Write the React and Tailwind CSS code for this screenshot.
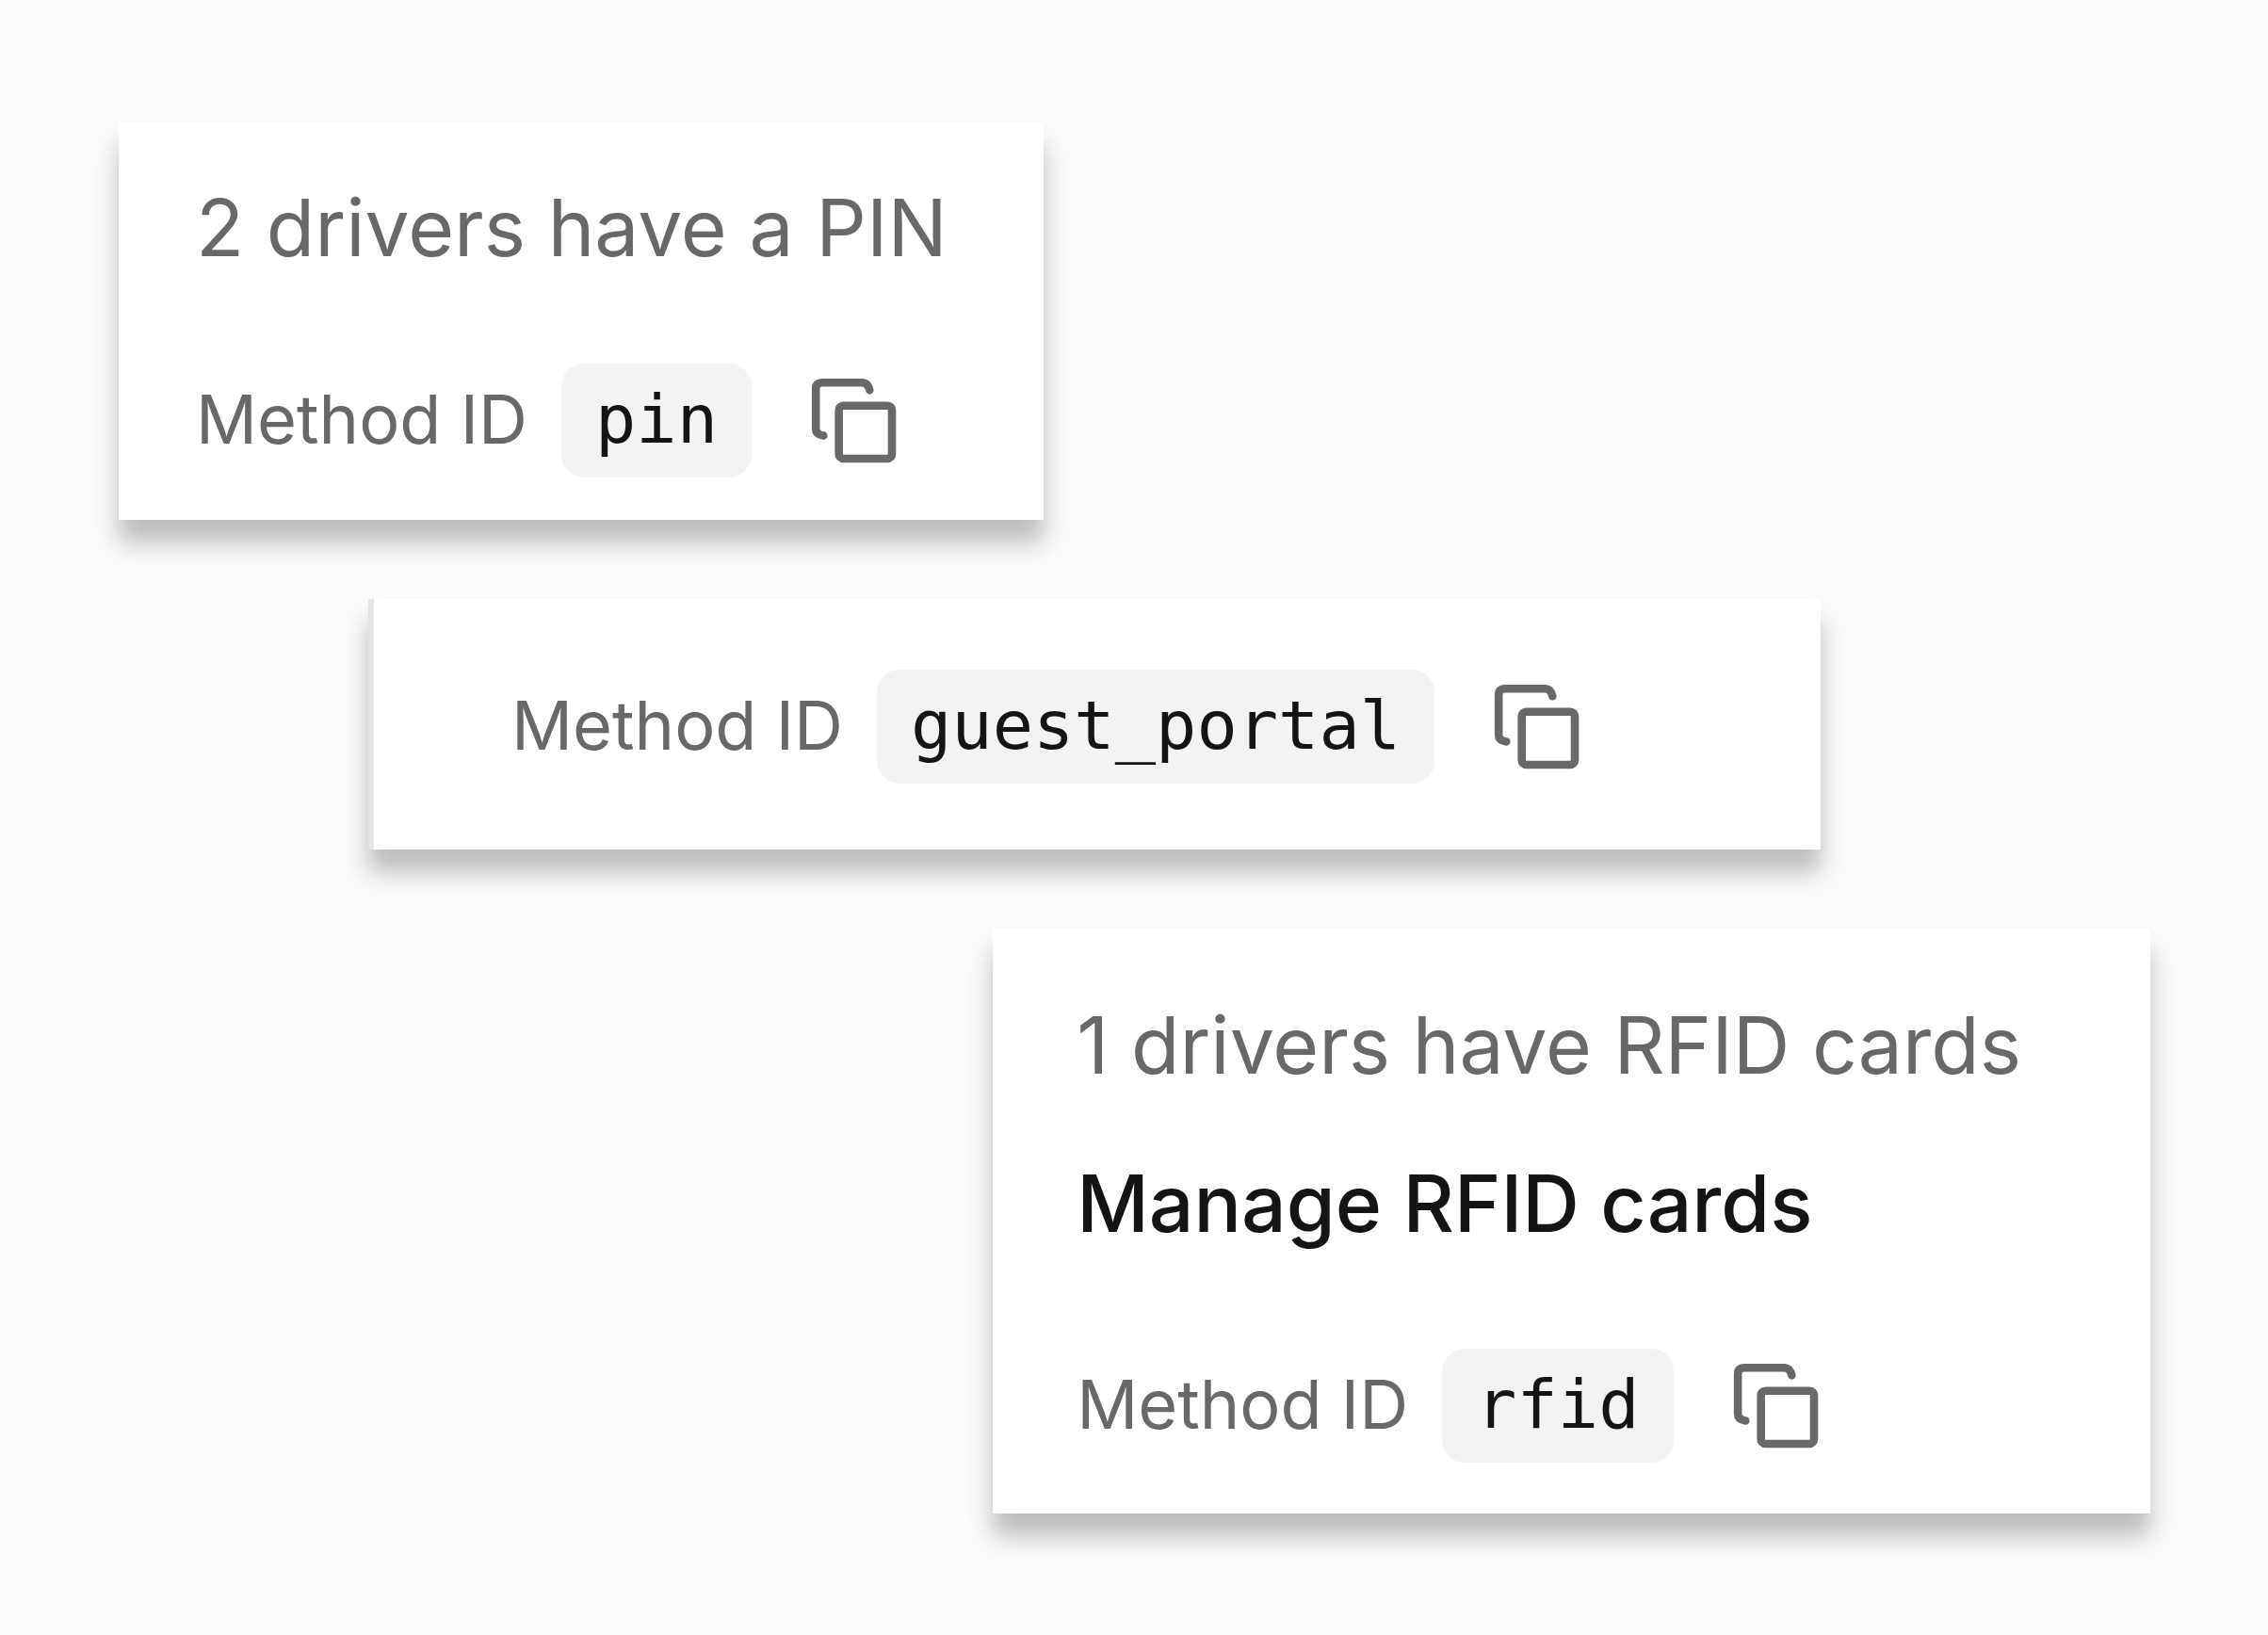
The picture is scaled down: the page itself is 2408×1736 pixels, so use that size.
import React from 'react';

const CopyIcon = () => (
    <svg
        width="98"
        height="98"
        viewBox="0 0 24 24"
        fill="none"
        stroke="currentColor"
        strokeWidth="2.1"
        strokeLinecap="round"
        strokeLinejoin="round"
        aria-hidden="true"
    >
        <rect x="8" y="8" width="13.8" height="13.8" rx="1.2" />
        <path d="M4 15.8C2.8 15.6 2 15 2 14V3.6C2 2.6 2.6 2 3.6 2H14C15.1 2 15.8 2.8 16 4" />
    </svg>
);

const CopyButton = ({ value }) => (
    <button
        type="button"
        aria-label={`Copy ${value}`}
        onClick={() => navigator.clipboard?.writeText(value)}
        className="p-6 text-[#676869] hover:text-[#141414]"
    >
        <CopyIcon />
    </button>
);

const MethodId = ({ id }) => (
    <div className="flex items-center h-[121px]">
        <span className="pb-1 text-[72px] leading-[96px] text-[#676869] whitespace-nowrap">Method ID</span>
        <code className="flex items-center h-full mx-9 px-9 pb-1 rounded-3xl bg-[#f3f3f3] text-[#141414] text-[72px] leading-[96px] font-['DejaVu_Sans_Mono','Liberation_Mono',monospace]">
            {id}
        </code>
        <CopyButton value={id} />
    </div>
);

const Card = ({ className, children }) => (
    <section className={`w-fit bg-white shadow-[0_24px_24px_rgba(0,0,0,0.25)] ${className}`}>
        {children}
    </section>
);

const App = () => {
    return (
        <main className="min-h-screen flex flex-col gap-[84px] py-[130px] pl-[126px] pr-[125px] bg-[#fafbfd] font-['Inter',sans-serif]">

            {/* PIN */}
            <Card className="self-start pt-[52px] pb-[45px] pl-[82px] pr-[102px]">
                <p className="mb-[84px] text-[84px] leading-[120px] text-[#676869] whitespace-nowrap">2 drivers have a PIN</p>
                <MethodId id="pin" />
            </Card>

            {/* Guest portal */}
            <Card className="self-start ml-[265px] pt-[75px] pb-[70px] pl-[146px] pr-[228px] border-l-[6px] border-[#e4e6e6]">
                <MethodId id="guest_portal" />
            </Card>

            {/* RFID */}
            <Card className="self-end pt-[64px] pb-[54px] pl-[89px] pr-[137px]">
                <p className="mb-12 text-[84px] leading-[120px] text-[#676869] whitespace-nowrap">1 drivers have RFID cards</p>
                <button type="button" className="block mb-[94px] text-[84px] leading-[120px] font-medium text-[#141414] whitespace-nowrap">
                    Manage RFID cards
                </button>
                <MethodId id="rfid" />
            </Card>

        </main>
    );
};

export default App;
